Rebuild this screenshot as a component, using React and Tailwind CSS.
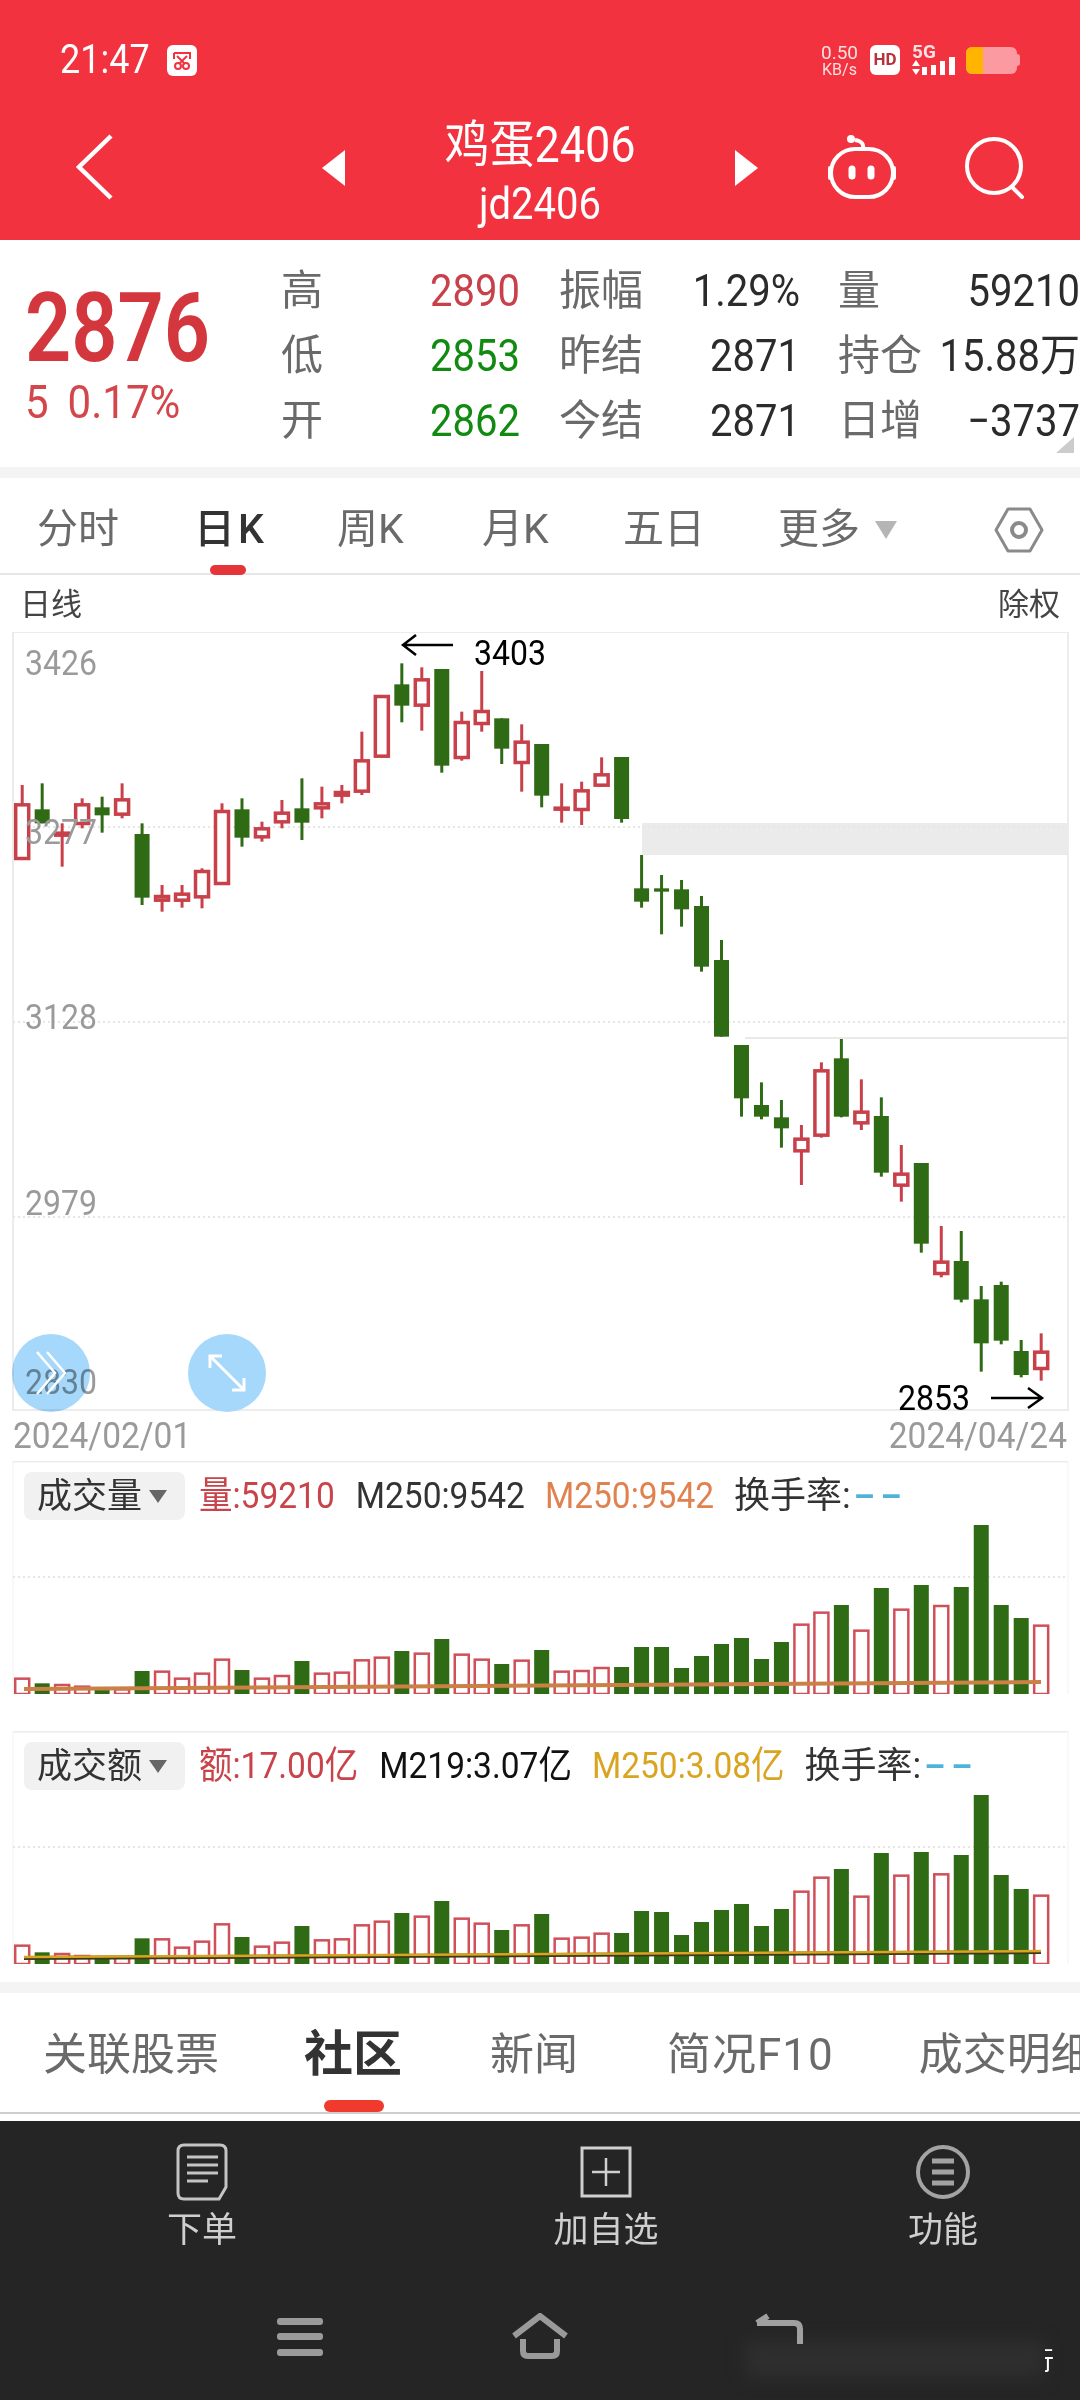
const RED = "#c8404a";
const GREEN = "#2f6a15";

// [color, wickTop, bodyTop, bodyBottom, wickBottom] read off the chart, scaled by z2
const z2 = (v) => 470 + v / 3;
const candles = [
  ["r", 945, 1000, 1170, 1170],
  ["g", 940, 1018, 1060, 1060],
  ["r", 1060, 1085, 1100, 1190],
  ["r", 985, 1000, 1065, 1075],
  ["g", 980, 1012, 1036, 1088],
  ["r", 940, 985, 1037, 1045],
  ["g", 1060, 1092, 1283, 1305],
  ["r", 1245, 1275, 1295, 1325],
  ["r", 1245, 1268, 1295, 1313],
  ["r", 1195, 1200, 1285, 1315],
  ["r", 1000, 1020, 1245, 1245],
  ["g", 985, 1018, 1103, 1130],
  ["r", 1055, 1072, 1105, 1115],
  ["r", 990, 1025, 1060, 1075],
  ["g", 925, 1015, 1058, 1110],
  ["r", 950, 997, 1018, 1045],
  ["r", 945, 963, 980, 1000],
  ["r", 785, 868, 968, 975],
  ["r", 675, 675, 863, 863],
  ["g", 580, 643, 707, 757],
  ["r", 592, 625, 710, 782],
  ["g", 597, 597, 887, 908],
  ["r", 725, 753, 867, 872],
  ["r", 603, 720, 765, 785],
  ["g", 745, 745, 836, 882],
  ["r", 763, 812, 882, 965],
  ["g", 822, 822, 977, 1012],
  ["r", 940, 1010, 1017, 1058],
  ["r", 935, 958, 1023, 1065],
  ["r", 862, 910, 950, 950],
  ["g", 861, 861, 1047, 1058],
  ["g", 1155, 1255, 1295, 1313],
  ["g", 1215, 1255, 1265, 1393],
  ["g", 1230, 1258, 1318, 1370],
  ["g", 1278, 1308, 1490, 1505],
  ["g", 1410, 1470, 1700, 1700],
  ["g", 1725, 1725, 1885, 1940],
  ["g", 1837, 1905, 1940, 1948],
  ["g", 1890, 1942, 1975, 2033],
  ["r", 1965, 2003, 2047, 2145],
  ["r", 1777, 1798, 2000, 2003],
  ["g", 1707, 1765, 1940, 1942],
  ["r", 1828, 1922, 1963, 1980],
  ["g", 1882, 1938, 2108, 2120],
  ["r", 2025, 2108, 2150, 2195],
  ["g", 2079, 2079, 2321, 2348],
  ["r", 2268, 2372, 2415, 2422],
  ["g", 2283, 2373, 2489, 2497],
  ["g", 2448, 2488, 2620, 2705],
  ["g", 2435, 2445, 2612, 2623],
  ["g", 2610, 2643, 2715, 2722],
  ["r", 2590, 2642, 2700, 2732],
];

const volTops = [
  683, 700, 702, 707, 715, 715, 663, 662, 683, 668, 626, 660, 683, 675, 633, 668, 665, 628, 620, 603, 608, 567, 611, 626,
  642, 629, 600, 662, 660, 651, 651, 591, 591, 654, 618, 582, 564, 627, 576, 521, 485, 465, 539, 414, 476, 405, 465, 411,
  225, 465, 504, 524,
];

const amtTops = [
  1484, 1507, 1509, 1515, 1520, 1520, 1465, 1465, 1490, 1472, 1420, 1461, 1487, 1475, 1428, 1468, 1465, 1423, 1412, 1389,
  1397, 1353, 1403, 1418, 1440, 1423, 1392, 1463, 1460, 1448, 1449, 1383, 1386, 1455, 1416, 1380, 1362, 1428, 1377, 1322,
  1280, 1257, 1337, 1209, 1274, 1206, 1270, 1215, 1035, 1275, 1317, 1334,
];

const xAt = (i) => 22.2 + i * 19.98;

const KLineSvg = () => (
  <svg width="1080" height="780" viewBox="0 632 1080 780" className="block">
    <rect x="13" y="632" width="1055" height="778" fill="none" stroke="#ececec" strokeWidth="2" />
    <rect x="642" y="823" width="426" height="32" fill="#ebebeb" />
    {[827, 1022, 1217].map((y) => (
      <line key={y} x1="13" x2="1068" y1={y} y2={y} stroke="#e6e6e6" strokeWidth="2" strokeDasharray="2 3" />
    ))}
    <rect x="745" y="1037" width="323" height="2" fill="#e9e9e9" />
    {candles.map(([c, wt, bt, bb, wb], i) => {
      const x = xAt(i);
      const col = c === "r" ? RED : GREEN;
      return (
        <g key={i}>
          <line x1={x} x2={x} y1={z2(wt)} y2={z2(wb)} stroke={col} strokeWidth="3" />
          {c === "r" ? (
            <rect x={x - 6.5} y={z2(bt) + 1.5} width="13" height={Math.max(z2(bb) - z2(bt) - 3, 1)} fill="#fff" stroke={col} strokeWidth="3.5" />
          ) : (
            <rect x={x - 7.5} y={z2(bt)} width="15" height={z2(bb) - z2(bt)} fill={col} />
          )}
        </g>
      );
    })}
    <path d="M453 645H404M416 635L403 645L416 655" fill="none" stroke="#000" strokeWidth="2.5" />
    <path d="M991 1398H1041M1028 1388L1042 1398L1028 1408" fill="none" stroke="#000" strokeWidth="2.5" />
  </svg>
);

const VolumeSvg = ({ tops, gridY, offset, bottom, lines }) => (
  <svg width="1080" height="233" viewBox={`0 ${offset} 1080 233`} className="block">
    <line x1="13" x2="1068" y1={offset} y2={offset} stroke="#ececec" strokeWidth="3" />
    <line x1="13" x2="13" y1={offset} y2={bottom} stroke="#f2f2f2" />
    <line x1="1068" x2="1068" y1={offset} y2={bottom} stroke="#f2f2f2" />
    <line x1="13" x2="1068" y1={gridY} y2={gridY} stroke="#e6e6e6" strokeWidth="2" strokeDasharray="2 3" />
    {tops.map((t, i) => {
      const x = xAt(i);
      const y = 1450 + t / 3;
      return candles[i][0] === "r" ? (
        <rect key={i} x={x - 7} y={y + 1} width="14" height={bottom - y - 1} fill="#fff" stroke="#d0505a" strokeWidth="2.5" />
      ) : (
        <rect key={i} x={x - 7.5} y={y} width="15" height={bottom - y} fill={GREEN} />
      );
    })}
    {lines.map(([y1, y2, col, w]) => (
      <line key={col} x1="24" x2="1041" y1={y1} y2={y2} stroke={col} strokeWidth={w} />
    ))}
  </svg>
);

const Stat = ({ label, value, color = "#2b2b2b" }) => (
  <div className="flex w-full items-center justify-between whitespace-nowrap">
    <span className="text-[42px] leading-none text-[#6a6a6a]">{label}</span>
    <span className="inline-block scale-y-[1.12] text-[40px] leading-none" style={{ color }}>
      {value}
    </span>
  </div>
);

const QuoteRow = ({ items }) => (
  <div className="flex h-[65px] items-center">
    <div className="flex w-[239px]">
      <Stat {...items[0]} />
    </div>
    <div className="ml-[39px] flex w-[241px]">
      <Stat {...items[1]} />
    </div>
    <div className="ml-[38px] flex w-[242px]">
      <Stat {...items[2]} />
    </div>
  </div>
);

const IndicatorHead = ({ title, children }) => (
  <div className="absolute top-[11px] left-[24px] flex h-[48px] items-center whitespace-nowrap text-[33.5px]">
    <div className="flex h-[48px] w-[161px] items-center gap-[7px] rounded-lg bg-[#f1f1f1] pl-[13px]">
      <span className="text-[35px] leading-none text-[#333]">{title}</span>
      <span className="h-0 w-0 border-x-[9px] border-t-[13px] border-x-transparent border-t-[#666]" />
    </div>
    {children}
  </div>
);

const Legend = ({ color, ml, children }) => (
  <span className="scale-y-[1.12] leading-none" style={{ color, marginLeft: ml }}>
    {children}
  </span>
);

const Turnover = () => (
  <>
    <span className="ml-[20px] text-[36px] leading-none text-[#333]">换手率:</span>
    <span className="ml-[3px] text-[33px] font-bold leading-none tracking-[6px] text-[#4fb3d9]">––</span>
  </>
);

const AxisLabel = ({ cls, children }) => (
  <span className={`absolute left-[25px] scale-y-[1.12] text-[32px] leading-none text-[#9a9a9a] ${cls}`}>{children}</span>
);

const KTab = ({ children, w, active }) => (
  <span className={`whitespace-nowrap text-[41px] leading-none ${w} ${active ? "font-medium tracking-[3px] text-[#333]" : "text-[#6a6a6a]"}`}>{children}</span>
);

const BottomTab = ({ children, ml, active, cls = "" }) => (
  <span
    className={`whitespace-nowrap leading-none ${active ? "text-[49px] font-bold text-[#333]" : "text-[44px] text-[#6a6a6a]"} ${cls}`}
    style={{ marginLeft: ml }}
  >
    {children}
  </span>
);

const ActionItem = ({ icon, label, w }) => (
  <div className={`flex flex-col items-center ${w}`}>
    <div className="flex h-[62px] items-center">{icon}</div>
    <span className="mt-[8px] text-[35px] leading-[40px] text-[#cfcfcf]">{label}</span>
  </div>
);

export default function App() {
  return (
    <div className="h-[2400px] w-[1080px] overflow-hidden bg-white font-['Roboto','Noto_Sans_CJK_SC',sans-serif]">
      {/* red header */}
      <header className="h-[240px] bg-[#f2323f] text-white">
        <div className="flex h-[120px] items-center pl-[60px] pr-[60px]">
          <span className="scale-y-[1.12] text-[36px] leading-none">21:47</span>
          <svg width="30" height="31" viewBox="0 0 30 31" className="ml-[17px]">
            <rect width="30" height="31" rx="6" fill="#fff" />
            <path d="M7 8H23V14M7 8V14" fill="none" stroke="#f2323f" strokeWidth="2" />
            <circle cx="11" cy="21" r="3" fill="none" stroke="#f2323f" strokeWidth="2" />
            <circle cx="19" cy="21" r="3" fill="none" stroke="#f2323f" strokeWidth="2" />
            <path d="M10 11L18 19M20 11L12 19" stroke="#f2323f" strokeWidth="2" />
          </svg>
          <div className="ml-auto flex items-center">
            <div className="flex flex-col items-center text-[#fde0e2]">
              <span className="text-[19px] leading-[19px]">0.50</span>
              <span className="text-[16px] leading-[16px]">KB/s</span>
            </div>
            <span className="ml-[12px] flex h-[30px] w-[30px] items-center justify-center rounded-md bg-white text-[17px] font-bold text-[#b8323c]">HD</span>
            <div className="relative ml-[12px] h-[30px] w-[45px]">
              <span className="absolute top-[-3px] left-0 text-[19px] font-bold leading-[20px] text-[#fde0e2]">5G</span>
              <svg width="45" height="30" viewBox="0 0 45 30" className="block">
                <path d="M0 21L4 15L8 21ZM0 24H8L4 30ZM10 22h5v8h-5zM19 20h5v10h-5zM28 16h5v14h-5zM37 12h6v18h-6z" fill="#fff" />
              </svg>
            </div>
            <div className="ml-[9px] flex h-[27px] w-[51px] overflow-hidden rounded-md bg-[#fb9aa0]">
              <span className="h-full w-[17px] bg-[#ffb400]" />
            </div>
            <span className="h-[12px] w-[3px] rounded-r bg-[#fb9aa0]" />
          </div>
        </div>
        <div className="flex h-[120px] items-start">
          <svg width="40" height="66" viewBox="0 0 40 66" fill="none" stroke="#fff" strokeWidth="4.500" className="mt-[14px] ml-[75px]">
            <path d="M36 2L4 33L36 64" />
          </svg>
          <span className="mt-[30px] ml-[207px] h-0 w-0 border-y-[18px] border-r-[23px] border-y-transparent border-r-white" />
          <div className="flex w-[390px] flex-col items-center">
            <span className="mt-[2px] scale-y-[1.12] text-[45px] leading-[46px]">鸡蛋2406</span>
            <span className="mt-[13px] scale-y-[1.12] text-[40px] leading-[46px]">jd2406</span>
          </div>
          <span className="mt-[30px] h-0 w-0 border-y-[18px] border-l-[23px] border-y-transparent border-l-white" />
          <svg width="72" height="68" viewBox="0 0 72 68" className="mt-[12px] ml-[68px]" fill="none" stroke="#fff" strokeWidth="4">
            <rect x="5" y="17" width="62" height="48" rx="24" />
            <path d="M4 36V46M68 36V46" strokeWidth="4" strokeLinecap="round" />
            <path d="M37 17C38 11 35 9 29 8" />
            <circle cx="25" cy="7" r="4" fill="#fff" stroke="none" />
            <path d="M26 37V44M45 37V44" strokeWidth="7" strokeLinecap="round" />
          </svg>
          <svg width="62" height="64" viewBox="0 0 62 64" className="mt-[17px] ml-[67px]" fill="none" stroke="#fff" strokeWidth="4">
            <circle cx="29" cy="29" r="27" />
            <path d="M47 50L57 60" strokeLinecap="round" />
          </svg>
        </div>
      </header>

      {/* quote block */}
      <section className="relative flex h-[227px] overflow-hidden">
        <div className="w-[281px] pt-[38px] pl-[25px]">
          <div className="origin-top-left scale-y-[1.2] text-[81px] font-semibold leading-[84px] text-[#d3373d]">2876</div>
          <div className="mt-[16px] flex origin-top-left scale-y-[1.12] text-[42px] leading-[44px] text-[#d3474c]">
            <span>5</span>
            <span className="ml-[19px]">0.17%</span>
          </div>
        </div>
        <div className="pt-[18px]">
          <QuoteRow items={[{ label: "高", value: "2890", color: RED }, { label: "振幅", value: "1.29%" }, { label: "量", value: "59210" }]} />
          <QuoteRow items={[{ label: "低", value: "2853", color: "#108a10" }, { label: "昨结", value: "2871" }, { label: "持仓", value: "15.88万" }]} />
          <QuoteRow items={[{ label: "开", value: "2862", color: "#108a10" }, { label: "今结", value: "2871" }, { label: "日增", value: "−3737" }]} />
        </div>
        <span className="absolute right-[6px] bottom-[14px] h-0 w-0 border-b-[16px] border-l-[18px] border-b-[#cccccc] border-l-transparent" />
      </section>
      <div className="h-[11px] bg-[#f4f4f4]" />

      {/* period tabs */}
      <nav className="relative flex h-[97px] items-center border-b-2 border-[#e6e6e6] pt-[8px] pl-[37px]">
        <KTab w="w-[157px]">分时</KTab>
        <KTab w="w-[143px]" active>日K</KTab>
        <KTab w="w-[145px]">周K</KTab>
        <KTab w="w-[141px]">月K</KTab>
        <KTab w="w-[155px]">五日</KTab>
        <KTab w="w-[97px]">更多</KTab>
        <span className="h-0 w-0 border-x-[11px] border-t-[18px] border-x-transparent border-t-[#b5b5b5]" />
        <svg width="50" height="46" viewBox="0 0 50 46" className="ml-[97px]" fill="none" stroke="#8a8a8a" strokeWidth="3">
          <path d="M14 2H36L48 23L36 44H14L2 23Z" strokeLinejoin="round" />
          <circle cx="25" cy="23" r="7" strokeWidth="4" />
        </svg>
        <span className="absolute bottom-[-2px] left-[210px] h-[10px] w-[36px] rounded-full bg-[#e5353b]" />
      </nav>
      <div className="flex h-[57px] items-center justify-between px-[20px] pt-[2px] text-[31px] leading-none text-[#444]">
        <span>日线</span>
        <span>除权</span>
      </div>

      {/* k line chart */}
      <section className="relative h-[780px]">
        <KLineSvg />
        <AxisLabel cls="top-[15px]">3426</AxisLabel>
        <AxisLabel cls="top-[184px]">3277</AxisLabel>
        <AxisLabel cls="top-[369px]">3128</AxisLabel>
        <AxisLabel cls="top-[555px]">2979</AxisLabel>
        <AxisLabel cls="top-[734px]">2830</AxisLabel>
        <span className="absolute top-[5px] left-[474px] scale-y-[1.12] text-[32px] leading-none text-black">3403</span>
        <span className="absolute top-[750px] left-[898px] scale-y-[1.12] text-[32px] leading-none text-black">2853</span>
        <span className="absolute top-[702px] left-[12px] h-[78px] w-[78px] rounded-full bg-[#a5d8fb] mix-blend-multiply" />
        <svg width="40" height="50" viewBox="0 0 40 50" fill="none" stroke="#fff" strokeWidth="2.500" className="absolute top-[716px] left-[31px]">
          <path d="M6 4L24 25L6 46M16 4L34 25L16 46" />
        </svg>
        <span className="absolute top-[702px] left-[188px] flex h-[78px] w-[78px] items-center justify-center rounded-full bg-[#a5d8fb]">
          <svg width="42" height="42" viewBox="0 0 42 42" fill="none" stroke="#fff" strokeWidth="3">
            <path d="M4 4L38 38M4 16V4H16M38 26V38H26" />
          </svg>
        </span>
      </section>
      <div className="flex h-[49px] items-center justify-between px-[13px] pb-[2px] text-[33.5px] leading-none text-[#9a9a9a]">
        <span className="scale-y-[1.12]">2024/02/01</span>
        <span className="scale-y-[1.12]">2024/04/24</span>
      </div>

      {/* volume panel */}
      <section className="relative h-[233px]">
        <VolumeSvg tops={volTops} gridY={1577} offset={1461} bottom={1694} lines={[[1689, 1682, "#c98146", 4]]} />
        <IndicatorHead title="成交量">
          <Legend color="#c8434a" ml="14px">量:59210</Legend>
          <Legend color="#333" ml="21px">M250:9542</Legend>
          <Legend color="#e0824f" ml="20px">M250:9542</Legend>
          <Turnover />
        </IndicatorHead>
      </section>
      <div className="h-[37px]" />

      {/* amount panel */}
      <section className="relative h-[233px]">
        <VolumeSvg
          tops={amtTops}
          gridY={1847}
          offset={1731}
          bottom={1964}
          lines={[
            [1958, 1952, "#3b3b1a", 4],
            [1957, 1951, "#d9a520", 2.5],
          ]}
        />
        <IndicatorHead title="成交额">
          <Legend color="#c8434a" ml="14px">额:17.00亿</Legend>
          <Legend color="#111" ml="21px">M219:3.07亿</Legend>
          <Legend color="#d9a520" ml="20px">M250:3.08亿</Legend>
          <Turnover />
        </IndicatorHead>
      </section>
      <div className="h-[18px]" />
      <div className="h-[11px] bg-[#f4f4f4]" />

      {/* lower tabs */}
      <nav className="relative flex h-[121px] items-center overflow-hidden border-b-2 border-[#cfcfcf] pt-[4px] pl-[43px]">
        <BottomTab>关联股票</BottomTab>
        <BottomTab ml="85px" active>社区</BottomTab>
        <BottomTab ml="88px">新闻</BottomTab>
        <BottomTab ml="89px" cls="tracking-[1px]">简况F10</BottomTab>
        <BottomTab ml="85px">成交明细</BottomTab>
        <span className="absolute bottom-0 left-[324px] h-[12px] w-[60px] rounded-full bg-[#f03a2e]" />
      </nav>
      <div className="h-[7px]" />

      {/* dark action bar */}
      <footer className="h-[279px] bg-[#252525]">
        <div className="flex pt-[20px]">
          <ActionItem
            w="w-[404px]"
            label="下单"
            icon={
              <svg width="52" height="58" viewBox="0 0 52 58" fill="none" stroke="#c4c4c4" strokeWidth="3">
                <path d="M8 2H44Q50 2 50 8V44L43 56H8Q2 56 2 50V8Q2 2 8 2Z" />
                <path d="M11 14H42M11 22H42M11 30H42M11 38H32" strokeWidth="3" />
              </svg>
            }
          />
          <ActionItem
            w="w-[404px]"
            label="加自选"
            icon={
              <svg width="52" height="52" viewBox="0 0 52 52" fill="none" stroke="#d0d0d0" strokeWidth="3">
                <rect x="2" y="2" width="48" height="48" />
                <path d="M26 12V40M12 26H40" strokeWidth="2.500" />
              </svg>
            }
          />
          <ActionItem
            w="w-[270px]"
            label="功能"
            icon={
              <svg width="54" height="54" viewBox="0 0 54 54" fill="none" stroke="#a3a3a3" strokeWidth="4">
                <circle cx="27" cy="27" r="25" />
                <path d="M16 16H38M16 27H38M16 38H38" strokeWidth="5" />
              </svg>
            }
          />
        </div>
        <div className="relative mt-[62px] flex items-start pl-[277px]">
          <span className="absolute top-[27px] left-[745px] h-[38px] w-[300px] bg-[#2e2e2e] blur-sm" />
          <svg width="46" height="38" viewBox="0 0 46 38" fill="#9a9a9a" className="mt-[5px]">
            <rect width="46" height="7" rx="3" />
            <rect y="15" width="46" height="7" rx="3" />
            <rect y="31" width="46" height="7" rx="3" />
          </svg>
          <svg width="58" height="46" viewBox="0 0 58 46" fill="none" stroke="#9a9a9a" strokeWidth="6" className="ml-[188px]">
            <path d="M3 23L29 3L55 23" />
            <path d="M12 26V38Q12 43 17 43H41Q46 43 46 38V26" />
          </svg>
          <svg width="50" height="32" viewBox="0 0 50 32" fill="none" stroke="#a0a0a0" strokeWidth="6" className="relative ml-[185px]">
            <path d="M3 10H40Q46 10 46 16V31M3 10L14 3" />
          </svg>
          <span className="absolute top-[33px] left-[1045px] flex h-[30px] w-[9px] justify-end overflow-hidden text-[26px] leading-[30px] text-white">行</span>
        </div>
      </footer>
    </div>
  );
}
